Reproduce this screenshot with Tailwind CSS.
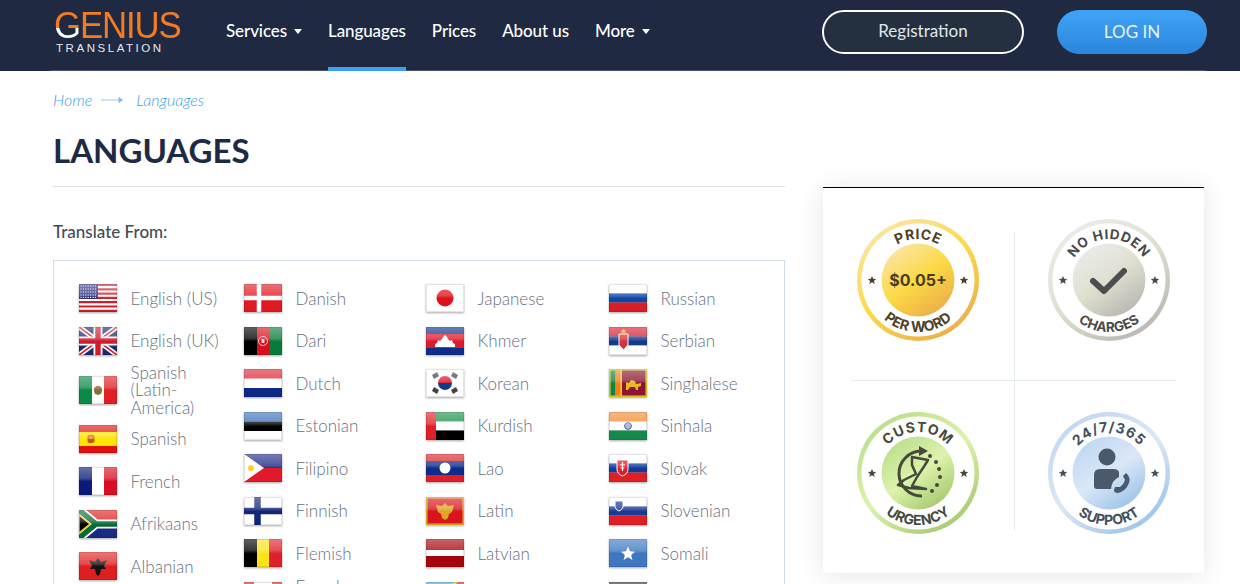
<!doctype html>
<html lang="en">
<head>
<meta charset="utf-8">
<title>Languages</title>
<script src="https://cdn.jsdelivr.net/npm/@tailwindcss/browser@4"></script>
</head>
<body class="bg-white">
<svg class="absolute w-0 h-0" aria-hidden="true"><defs>
<linearGradient id="gl" x1="0" y1="0" x2="0" y2="1"><stop offset="0" stop-color="#fff" stop-opacity=".38"/><stop offset=".4" stop-color="#fff" stop-opacity=".22"/><stop offset=".52" stop-color="#fff" stop-opacity="0"/></linearGradient>
<symbol id="g" viewBox="0 0 38 28"><rect width="38" height="28" fill="url(#gl)"/><rect x=".5" y=".5" width="37" height="27" fill="none" stroke="#000" stroke-opacity=".1"/></symbol>
</defs></svg>
<div class="w-[1240px] h-[584px] overflow-hidden font-['Lato','Liberation_Sans',sans-serif]">
  <header class="relative h-[71px] bg-[#1f2942]">
    <div class="absolute left-[50px] right-[34px] bottom-0 h-[1.5px] bg-[#4c5367]"></div>
    <div class="relative flex items-start h-[71px] pl-[54px]">
      <div class="w-[172px] shrink-0 pt-[9px]">
        <div class="h-[33px] leading-[33px] text-[37px] font-['Liberation_Sans',sans-serif] tracking-[-1.2px] text-[#f47b20] scale-x-[.94] origin-left whitespace-nowrap"><span class="bg-clip-text text-transparent bg-linear-to-b from-[#f47b20] from-55% to-white to-55%">G</span>ENIUS</div>
        <div class="pl-[2px] h-[12px] leading-[12px] text-[11.5px] tracking-[2.55px] text-[#e6e8ec] font-['Liberation_Sans',sans-serif] whitespace-nowrap">TRANSLATION</div>
      </div>
      <nav class="flex gap-[26px] text-[17px] font-medium text-white tracking-[-.1px]">
        <a class="h-[71px] leading-[62px] flex items-start gap-[7px]">Services <span class="mt-[29px] border-x-[4px] border-t-[5px] border-x-transparent border-t-white"></span></a>
        <a class="h-[71px] leading-[62px] border-b-4 border-[#3f9ff0]">Languages</a>
        <a class="h-[71px] leading-[62px]">Prices</a>
        <a class="h-[71px] leading-[62px]">About us</a>
        <a class="h-[71px] leading-[62px] flex items-start gap-[7px]">More <span class="mt-[29px] border-x-[4px] border-t-[5px] border-x-transparent border-t-white"></span></a>
      </nav>
      <a class="absolute left-[822px] top-[10px] w-[202px] h-[44px] rounded-full border-2 border-white bg-[#243040] text-[#e2e5ea] text-[17px] flex items-center justify-center pb-[3px]">Registration</a>
      <a class="absolute left-[1057px] top-[10px] w-[150px] h-[44px] rounded-full bg-linear-to-b from-[#40a4f6] to-[#2c86da] text-[#e8f2fb] text-[17px] flex items-center justify-center">LOG IN</a>
    </div>
  </header>
  <main class="flex pl-[53px] gap-[38px]">
    <section class="w-[732px] shrink-0">
      <div class="h-[58px] pt-[19px] flex items-start italic text-[16px] leading-[20px] text-[#3d9cf0] font-light">
        <span>Home</span>
        <svg class="w-[22px] h-[8px] mx-[9px] mt-[6px]" viewBox="0 0 22 8"><path d="M0 4h21M18 1.5 21.5 4 18 6.5z" fill="#7db9f2" stroke="#7db9f2" stroke-width=".8"/></svg>
        <span class="ml-[4px]">Languages</span>
      </div>
      <h1 class="h-[58px] border-b border-[#dde1e6] text-[33px] leading-[42px] font-bold text-[#1e2a45]">LANGUAGES</h1>
      <div class="h-[73px] pt-[34px] text-[17px] leading-[22px] font-medium text-[#434a59]">Translate From:</div>
      <div class="border border-[#cfdbe6] h-[400px] pl-[25px] pt-[16px] grid grid-cols-[165px_182px_183px_1fr] items-start text-[17px] leading-[17.5px] font-light text-[#66707f]">
        <ul>
          <li class="flex items-center gap-[13.5px] min-h-[42.5px] py-[1.5px] pr-[14px]"><svg class="w-[38px] h-[28px] shrink-0 drop-shadow-[0_1px_1px_rgba(0,0,0,.35)]" viewBox="0 0 38 28"><rect width="38" height="28" fill="#fff"/><path d="M0 1h38M0 5.3h38M0 9.6h38M0 13.9h38M0 18.2h38M0 22.5h38M0 26.8h38" stroke="#c8202f" stroke-width="2.2"/><rect width="19" height="15" fill="#2c2f80"/><path d="M1.5 2h16M1.5 5h16M1.5 8h16M1.5 11h16M1.5 13.5h16" stroke="#fff" stroke-width="1" stroke-dasharray="1 1.4"/><use href="#g"/></svg><span>English (US)</span></li>
          <li class="flex items-center gap-[13.5px] min-h-[42.5px] py-[1.5px] pr-[14px]"><svg class="w-[38px] h-[28px] shrink-0 drop-shadow-[0_1px_1px_rgba(0,0,0,.35)]" viewBox="0 0 38 28"><rect width="38" height="28" fill="#1a2a6e"/><path d="M0 0 38 28M38 0 0 28" stroke="#fff" stroke-width="5"/><path d="M0 0 38 28M38 0 0 28" stroke="#cf1b2b" stroke-width="1.6"/><path d="M19 0v28M0 14h38" stroke="#fff" stroke-width="9"/><path d="M19 0v28M0 14h38" stroke="#cf1b2b" stroke-width="5.4"/><use href="#g"/></svg><span>English (UK)</span></li>
          <li class="flex items-center gap-[13.5px] min-h-[42.5px] py-[1.5px] pr-[14px]"><svg class="w-[38px] h-[28px] shrink-0 drop-shadow-[0_1px_1px_rgba(0,0,0,.35)]" viewBox="0 0 38 28"><rect width="13" height="28" fill="#0a8a45"/><rect x="13" width="12" height="28" fill="#fff"/><rect x="25" width="13" height="28" fill="#df1f26"/><circle cx="19" cy="14" r="4.2" fill="#8f6a35"/><path d="M15.5 17q3.500 3 7 0" stroke="#3f8a3f" fill="none"/><use href="#g"/></svg><span>Spanish (Latin-America)</span></li>
          <li class="flex items-center gap-[13.5px] min-h-[42.5px] py-[1.5px] pr-[14px]"><svg class="w-[38px] h-[28px] shrink-0 drop-shadow-[0_1px_1px_rgba(0,0,0,.35)]" viewBox="0 0 38 28"><rect width="38" height="28" fill="#e01010"/><rect y="7" width="38" height="14" fill="#ffe500"/><rect x="8.500" y="10" width="7" height="8" rx="2" fill="#c8552a"/><path d="M9.500 11h5v3h-5z" fill="#e49a30"/><use href="#g"/></svg><span>Spanish</span></li>
          <li class="flex items-center gap-[13.5px] min-h-[42.5px] py-[1.5px] pr-[14px]"><svg class="w-[38px] h-[28px] shrink-0 drop-shadow-[0_1px_1px_rgba(0,0,0,.35)]" viewBox="0 0 38 28"><rect width="13" height="28" fill="#0a1a78"/><rect x="13" width="12" height="28" fill="#fff"/><rect x="25" width="13" height="28" fill="#d80f24"/><use href="#g"/></svg><span>French</span></li>
          <li class="flex items-center gap-[13.5px] min-h-[42.5px] py-[1.5px] pr-[14px]"><svg class="w-[38px] h-[28px] shrink-0 drop-shadow-[0_1px_1px_rgba(0,0,0,.35)]" viewBox="0 0 38 28"><rect width="38" height="14" fill="#df2020"/><rect y="14" width="38" height="14" fill="#1a2a80"/><path d="M0 0 17 14 0 28M17 14h21" fill="none" stroke="#fff" stroke-width="9"/><path d="M0 0 17 14 0 28M17 14h21" fill="none" stroke="#0a6a35" stroke-width="5.500"/><path d="M0 5 11 14 0 23z" fill="#000" stroke="#f5c518" stroke-width="1.500"/><use href="#g"/></svg><span>Afrikaans</span></li>
          <li class="flex items-center gap-[13.5px] min-h-[42.5px] py-[1.5px] pr-[14px]"><svg class="w-[38px] h-[28px] shrink-0 drop-shadow-[0_1px_1px_rgba(0,0,0,.35)]" viewBox="0 0 38 28"><rect width="38" height="28" fill="#df1f1f"/><path d="M19 6 22 10 28 8 25 14 27 17 22 17 21 22 19 24 17 22 16 17 11 17 13 14 10 8 16 10z" fill="#1a1212"/><use href="#g"/></svg><span>Albanian</span></li>
        </ul>
        <ul>
          <li class="flex items-center gap-[13.5px] min-h-[42.5px] py-[1.5px] pr-[14px]"><svg class="w-[38px] h-[28px] shrink-0 drop-shadow-[0_1px_1px_rgba(0,0,0,.35)]" viewBox="0 0 38 28"><rect width="38" height="28" fill="#df1a22"/><path d="M15 0v28M0 14h38" stroke="#fff" stroke-width="4.500"/><use href="#g"/></svg><span>Danish</span></li>
          <li class="flex items-center gap-[13.5px] min-h-[42.5px] py-[1.5px] pr-[14px]"><svg class="w-[38px] h-[28px] shrink-0 drop-shadow-[0_1px_1px_rgba(0,0,0,.35)]" viewBox="0 0 38 28"><rect width="13" height="28" fill="#000"/><rect x="13" width="12" height="28" fill="#d8101c"/><rect x="25" width="13" height="28" fill="#0a7a3a"/><circle cx="19" cy="14" r="4.500" fill="none" stroke="#f4c8c8" stroke-width="1"/><rect x="17.500" y="12" width="3" height="4" fill="#f4c8c8"/><use href="#g"/></svg><span>Dari</span></li>
          <li class="flex items-center gap-[13.5px] min-h-[42.5px] py-[1.5px] pr-[14px]"><svg class="w-[38px] h-[28px] shrink-0 drop-shadow-[0_1px_1px_rgba(0,0,0,.35)]" viewBox="0 0 38 28"><rect width="38" height="28" fill="#fff"/><rect width="38" height="9.500" fill="#dc2a32"/><rect y="19" width="38" height="9" fill="#0c2a86"/><use href="#g"/></svg><span>Dutch</span></li>
          <li class="flex items-center gap-[13.5px] min-h-[42.5px] py-[1.5px] pr-[14px]"><svg class="w-[38px] h-[28px] shrink-0 drop-shadow-[0_1px_1px_rgba(0,0,0,.35)]" viewBox="0 0 38 28"><rect width="38" height="28" fill="#fff"/><rect width="38" height="9.500" fill="#3a70b8"/><rect y="9.500" width="38" height="9.500" fill="#000"/><use href="#g"/></svg><span>Estonian</span></li>
          <li class="flex items-center gap-[13.5px] min-h-[42.5px] py-[1.5px] pr-[14px]"><svg class="w-[38px] h-[28px] shrink-0 drop-shadow-[0_1px_1px_rgba(0,0,0,.35)]" viewBox="0 0 38 28"><rect width="38" height="14" fill="#1f2a86"/><rect y="14" width="38" height="14" fill="#e01a2a"/><path d="M0 0 20 14 0 28z" fill="#fff"/><circle cx="7" cy="14" r="3" fill="#fcd116"/><use href="#g"/></svg><span>Filipino</span></li>
          <li class="flex items-center gap-[13.5px] min-h-[42.5px] py-[1.5px] pr-[14px]"><svg class="w-[38px] h-[28px] shrink-0 drop-shadow-[0_1px_1px_rgba(0,0,0,.35)]" viewBox="0 0 38 28"><rect width="38" height="28" fill="#fff"/><path d="M13.500 0v28M0 14h38" stroke="#12237a" stroke-width="6.500"/><use href="#g"/></svg><span>Finnish</span></li>
          <li class="flex items-center gap-[13.5px] min-h-[42.5px] py-[1.5px] pr-[14px]"><svg class="w-[38px] h-[28px] shrink-0 drop-shadow-[0_1px_1px_rgba(0,0,0,.35)]" viewBox="0 0 38 28"><rect width="13" height="28" fill="#000"/><rect x="13" width="12" height="28" fill="#fae319"/><rect x="25" width="13" height="28" fill="#df1f2a"/><use href="#g"/></svg><span>Flemish</span></li>
          <li class="flex items-center gap-[13.5px] min-h-[42.5px] py-[1.5px] pr-[14px]"><svg class="w-[38px] h-[28px] shrink-0 drop-shadow-[0_1px_1px_rgba(0,0,0,.35)]" viewBox="0 0 38 28"><rect width="38" height="28" fill="#fff"/><rect width="10" height="28" fill="#df2027"/><rect x="28" width="10" height="28" fill="#df2027"/><use href="#g"/></svg><span>French (Canadian)</span></li>
        </ul>
        <ul>
          <li class="flex items-center gap-[13.5px] min-h-[42.5px] py-[1.5px] pr-[14px]"><svg class="w-[38px] h-[28px] shrink-0 drop-shadow-[0_1px_1px_rgba(0,0,0,.35)]" viewBox="0 0 38 28"><rect width="38" height="28" fill="#fff"/><circle cx="19" cy="14" r="8.500" fill="#e0101c"/><use href="#g"/></svg><span>Japanese</span></li>
          <li class="flex items-center gap-[13.5px] min-h-[42.5px] py-[1.5px] pr-[14px]"><svg class="w-[38px] h-[28px] shrink-0 drop-shadow-[0_1px_1px_rgba(0,0,0,.35)]" viewBox="0 0 38 28"><rect width="38" height="28" fill="#0d2f8a"/><rect y="7" width="38" height="14" fill="#e01a2a"/><path d="M9 20v-3l2-1 1-3 2 1 2-2 1-2 2-2 2 2 1 2 2 2 2-1 1 3 2 1v3z" fill="#fff"/><use href="#g"/></svg><span>Khmer</span></li>
          <li class="flex items-center gap-[13.5px] min-h-[42.5px] py-[1.5px] pr-[14px]"><svg class="w-[38px] h-[28px] shrink-0 drop-shadow-[0_1px_1px_rgba(0,0,0,.35)]" viewBox="0 0 38 28"><rect width="38" height="28" fill="#fff"/><path d="M12 14a7 7 0 0 1 14 0z" fill="#dc1a2c"/><path d="M12 14a7 7 0 0 0 14 0z" fill="#123a8c"/><path d="M6 6 11 3 13 7 8 10zM27 3 32 6 30 10 25 7zM6 22 8 18 13 21 11 25zM30 18 32 22 27 25 25 21z" fill="#444"/><use href="#g"/></svg><span>Korean</span></li>
          <li class="flex items-center gap-[13.5px] min-h-[42.5px] py-[1.5px] pr-[14px]"><svg class="w-[38px] h-[28px] shrink-0 drop-shadow-[0_1px_1px_rgba(0,0,0,.35)]" viewBox="0 0 38 28"><rect width="38" height="9.500" fill="#18904a"/><rect y="9.500" width="38" height="9" fill="#fff"/><rect y="18.500" width="38" height="9.500" fill="#000"/><rect width="10" height="28" fill="#e01f26"/><use href="#g"/></svg><span>Kurdish</span></li>
          <li class="flex items-center gap-[13.5px] min-h-[42.5px] py-[1.5px] pr-[14px]"><svg class="w-[38px] h-[28px] shrink-0 drop-shadow-[0_1px_1px_rgba(0,0,0,.35)]" viewBox="0 0 38 28"><rect width="38" height="28" fill="#df1f26"/><rect y="7" width="38" height="14" fill="#0f2a8c"/><circle cx="19" cy="14" r="5.500" fill="#fff"/><use href="#g"/></svg><span>Lao</span></li>
          <li class="flex items-center gap-[13.5px] min-h-[42.5px] py-[1.5px] pr-[14px]"><svg class="w-[38px] h-[28px] shrink-0 drop-shadow-[0_1px_1px_rgba(0,0,0,.35)]" viewBox="0 0 38 28"><rect x=".75" y=".75" width="36.500" height="26.500" fill="#d9141e" stroke="#e6b820" stroke-width="1.500"/><path d="M19 6 22 9 28 8 26 15 23 17 22 21 19 23 16 21 15 17 12 15 10 8 16 9z" fill="#e0a526"/><use href="#g"/></svg><span>Latin</span></li>
          <li class="flex items-center gap-[13.5px] min-h-[42.5px] py-[1.5px] pr-[14px]"><svg class="w-[38px] h-[28px] shrink-0 drop-shadow-[0_1px_1px_rgba(0,0,0,.35)]" viewBox="0 0 38 28"><rect width="38" height="28" fill="#a4060c"/><rect y="11" width="38" height="6" fill="#fff"/><use href="#g"/></svg><span>Latvian</span></li>
          <li class="flex items-center gap-[13.5px] min-h-[42.5px] py-[1.5px] pr-[14px]"><svg class="w-[38px] h-[28px] shrink-0 drop-shadow-[0_1px_1px_rgba(0,0,0,.35)]" viewBox="0 0 38 28"><rect width="38" height="28" fill="#3fa6d8"/><path d="M0 28 38 0" stroke="#f0d020" stroke-width="11"/><path d="M0 28 38 0" stroke="#d8202a" stroke-width="7"/><use href="#g"/></svg><span>Lingala</span></li>
        </ul>
        <ul>
          <li class="flex items-center gap-[13.5px] min-h-[42.5px] py-[1.5px] pr-[14px]"><svg class="w-[38px] h-[28px] shrink-0 drop-shadow-[0_1px_1px_rgba(0,0,0,.35)]" viewBox="0 0 38 28"><rect width="38" height="9.500" fill="#fff"/><rect y="9.500" width="38" height="9" fill="#0c47a8"/><rect y="18.500" width="38" height="9.500" fill="#d81e26"/><use href="#g"/></svg><span>Russian</span></li>
          <li class="flex items-center gap-[13.5px] min-h-[42.5px] py-[1.5px] pr-[14px]"><svg class="w-[38px] h-[28px] shrink-0 drop-shadow-[0_1px_1px_rgba(0,0,0,.35)]" viewBox="0 0 38 28"><rect width="38" height="9.500" fill="#d81e30"/><rect y="9.500" width="38" height="9" fill="#123a8c"/><rect y="18.500" width="38" height="9.500" fill="#fff"/><path d="M10 7h9v11l-4.500 5L10 18z" fill="#d8303a" stroke="#fff"/><circle cx="14.500" cy="4.500" r="2.200" fill="#e0a526"/><use href="#g"/></svg><span>Serbian</span></li>
          <li class="flex items-center gap-[13.5px] min-h-[42.5px] py-[1.5px] pr-[14px]"><svg class="w-[38px] h-[28px] shrink-0 drop-shadow-[0_1px_1px_rgba(0,0,0,.35)]" viewBox="0 0 38 28"><rect width="38" height="28" fill="#ead21c"/><rect x="1.500" y="1.500" width="5" height="25" fill="#11824a"/><rect x="6.500" y="1.500" width="5" height="25" fill="#f57f20"/><rect x="13" y="1.500" width="23.500" height="25" fill="#8c1530"/><path d="M17 21v-8l3 1 2-3 4 1 1 3 5-1v3l-3 1v3h-2l-1-3h-5l-2 3z" fill="#e8b81f"/><use href="#g"/></svg><span>Singhalese</span></li>
          <li class="flex items-center gap-[13.5px] min-h-[42.5px] py-[1.5px] pr-[14px]"><svg class="w-[38px] h-[28px] shrink-0 drop-shadow-[0_1px_1px_rgba(0,0,0,.35)]" viewBox="0 0 38 28"><rect width="38" height="9.500" fill="#f58a2e"/><rect y="9.500" width="38" height="9" fill="#fff"/><rect y="18.500" width="38" height="9.500" fill="#148a4a"/><circle cx="19" cy="14" r="3.500" fill="#aab4dc" stroke="#41509c" stroke-width=".8"/><use href="#g"/></svg><span>Sinhala</span></li>
          <li class="flex items-center gap-[13.5px] min-h-[42.5px] py-[1.5px] pr-[14px]"><svg class="w-[38px] h-[28px] shrink-0 drop-shadow-[0_1px_1px_rgba(0,0,0,.35)]" viewBox="0 0 38 28"><rect width="38" height="9.500" fill="#fff"/><rect y="9.500" width="38" height="9" fill="#0f3a9c"/><rect y="18.500" width="38" height="9.500" fill="#df1f26"/><path d="M8 6h11v9q0 5-5.500 7Q8 20 8 15z" fill="#df1f26" stroke="#fff"/><path d="M13.500 8v9M11 11h5M11.500 14h4" stroke="#fff" stroke-width="1.200"/><use href="#g"/></svg><span>Slovak</span></li>
          <li class="flex items-center gap-[13.5px] min-h-[42.5px] py-[1.5px] pr-[14px]"><svg class="w-[38px] h-[28px] shrink-0 drop-shadow-[0_1px_1px_rgba(0,0,0,.35)]" viewBox="0 0 38 28"><rect width="38" height="9.500" fill="#fff"/><rect y="9.500" width="38" height="9" fill="#1a3a94"/><rect y="18.500" width="38" height="9.500" fill="#df1f26"/><path d="M6 4h8v6q-1 3-4 4-3-1-4-4z" fill="#1a3a94" stroke="#fff"/><use href="#g"/></svg><span>Slovenian</span></li>
          <li class="flex items-center gap-[13.5px] min-h-[42.5px] py-[1.5px] pr-[14px]"><svg class="w-[38px] h-[28px] shrink-0 drop-shadow-[0_1px_1px_rgba(0,0,0,.35)]" viewBox="0 0 38 28"><rect width="38" height="28" fill="#3d77bf"/><path d="M19 7.500 21 12.300 26 12.700 22.200 16 23.400 21 19 18.300 14.600 21 15.800 16 12 12.700 17 12.300z" fill="#fff"/><use href="#g"/></svg><span>Somali</span></li>
          <li class="flex items-center gap-[13.5px] min-h-[42.5px] py-[1.5px] pr-[14px]"><svg class="w-[38px] h-[28px] shrink-0 drop-shadow-[0_1px_1px_rgba(0,0,0,.35)]" viewBox="0 0 38 28"><rect width="38" height="28" fill="#333"/><use href="#g"/></svg><span>Swahili</span></li>
        </ul>
      </div>
    </section>
    <aside class="relative w-[381px] h-[386px] mt-[116px] shrink-0 border-t border-black bg-white shadow-[0_2px_22px_rgba(40,60,90,.13)] font-['Inter','Liberation_Sans',sans-serif]">
      <div class="absolute left-[191px] top-[44px] w-px h-[299px] bg-[#e6ebf0]"></div>
      <div class="absolute left-[28px] top-[192px] w-[325px] h-px bg-[#e6ebf0]"></div>
      <div class="relative grid grid-cols-[124px_124px] gap-x-[67px] gap-y-[68.5px] pl-[33px] pt-[30px]">
        <svg class="w-[124px] h-[124px]" viewBox="0 0 124 124">
          <defs><linearGradient id="a" x1=".15" y1="0" x2=".85" y2="1"><stop offset="0" stop-color="#fbe6b0"/><stop offset=".5" stop-color="#fcd944"/><stop offset="1" stop-color="#e9a84c"/></linearGradient><path id="a1" d="M21 62A41 41 0 0 1 103 62"/><path id="a2" d="M10 62A52 52 0 0 0 114 62"/></defs>
          <circle cx="62" cy="62" r="61" fill="url(#a)"/><circle cx="62" cy="62" r="56.500" fill="#fff"/><circle cx="62" cy="62" r="36.500" fill="url(#a)"/>
          <text font-size="14" font-weight="700" fill="#4f4126" text-anchor="middle" letter-spacing=".5"><textPath href="#a1" startOffset="50%">PRICE</textPath></text>
          <text font-size="14" font-weight="700" fill="#4f4126" text-anchor="middle"><textPath href="#a2" startOffset="50%">PER WORD</textPath></text>
          <text x="62" y="67.500" font-size="16" font-weight="700" fill="#4a3d22" text-anchor="middle">$0.05+</text>
          <path id="s" d="M16 58 17.200 60.800 20.200 61 17.900 63 18.700 66 16 64.300 13.300 66 14.100 63 11.800 61 14.800 60.800z" fill="#4f4126"/><path d="M108 58 109.200 60.800 112.200 61 109.900 63 110.700 66 108 64.300 105.300 66 106.100 63 103.800 61 106.800 60.800z" fill="#4f4126"/>
        </svg>
        <svg class="w-[124px] h-[124px]" viewBox="0 0 124 124">
          <defs><linearGradient id="b" x1=".15" y1="0" x2=".85" y2="1"><stop offset="0" stop-color="#eceded"/><stop offset=".5" stop-color="#dfdfcf"/><stop offset="1" stop-color="#b3b2ae"/></linearGradient><path id="b1" d="M21 62A41 41 0 0 1 103 62"/><path id="b2" d="M10 62A52 52 0 0 0 114 62"/></defs>
          <circle cx="62" cy="62" r="61" fill="url(#b)"/><circle cx="62" cy="62" r="56.500" fill="#fff"/><circle cx="62" cy="62" r="36.500" fill="url(#b)"/>
          <text font-size="13.500" font-weight="700" fill="#4a4a4a" text-anchor="middle" letter-spacing=".8"><textPath href="#b1" startOffset="50%">NO HIDDEN</textPath></text>
          <text font-size="13.500" font-weight="700" fill="#4a4a4a" text-anchor="middle"><textPath href="#b2" startOffset="50%">CHARGES</textPath></text>
          <path d="M46 63 57 73 77 53" fill="none" stroke="#4d4d4d" stroke-width="6" stroke-linecap="round" stroke-linejoin="round"/>
          <path d="M16 58 17.200 60.800 20.200 61 17.900 63 18.700 66 16 64.300 13.300 66 14.100 63 11.800 61 14.800 60.800z" fill="#4a4a4a"/><path d="M108 58 109.200 60.800 112.200 61 109.900 63 110.700 66 108 64.300 105.300 66 106.100 63 103.800 61 106.800 60.800z" fill="#4a4a4a"/>
        </svg>
        <svg class="w-[124px] h-[124px]" viewBox="0 0 124 124">
          <defs><linearGradient id="c" x1=".15" y1="0" x2=".85" y2="1"><stop offset="0" stop-color="#b8dc8a"/><stop offset=".5" stop-color="#dcf3ab"/><stop offset="1" stop-color="#a0c468"/></linearGradient><path id="c1" d="M21 62A41 41 0 0 1 103 62"/><path id="c2" d="M10 62A52 52 0 0 0 114 62"/></defs>
          <circle cx="62" cy="62" r="61" fill="url(#c)"/><circle cx="62" cy="62" r="56.500" fill="#fff"/><circle cx="62" cy="62" r="36.500" fill="url(#c)"/>
          <text font-size="14" font-weight="700" fill="#454a3a" text-anchor="middle" letter-spacing="1"><textPath href="#c1" startOffset="50%">CUSTOM</textPath></text>
          <text font-size="14" font-weight="700" fill="#454a3a" text-anchor="middle"><textPath href="#c2" startOffset="50%">URGENCY</textPath></text>
          <path d="M66 85A22 22 0 1 1 65 40" fill="none" stroke="#454a3a" stroke-width="3"/><path d="M63 35 72 40 63 45z" fill="#454a3a"/>
          <path d="M74 45h.01M80 51h.01M83 58h.01M84 66h.01M81 74h.01M76 80h.01" stroke="#454a3a" stroke-width="4" stroke-linecap="round"/>
          <path d="M56 46 72 49 69 54 61 66 56 75 70 78 53 77 42 74 48 69 60 63 56 54z" fill="none" stroke="#454a3a" stroke-width="2.500" stroke-linejoin="round"/>
          <path d="M16 58 17.200 60.800 20.200 61 17.900 63 18.700 66 16 64.300 13.300 66 14.100 63 11.800 61 14.800 60.800z" fill="#454a3a"/><path d="M108 58 109.200 60.800 112.200 61 109.900 63 110.700 66 108 64.300 105.300 66 106.100 63 103.800 61 106.800 60.800z" fill="#454a3a"/>
        </svg>
        <svg class="w-[124px] h-[124px]" viewBox="0 0 124 124">
          <defs><linearGradient id="d" x1=".15" y1="0" x2=".85" y2="1"><stop offset="0" stop-color="#bcd6f2"/><stop offset=".5" stop-color="#dbe8f7"/><stop offset="1" stop-color="#94bfe8"/></linearGradient><path id="d1" d="M21 62A41 41 0 0 1 103 62"/><path id="d2" d="M10 62A52 52 0 0 0 114 62"/></defs>
          <circle cx="62" cy="62" r="61" fill="url(#d)"/><circle cx="62" cy="62" r="56.500" fill="#fff"/><circle cx="62" cy="62" r="36.500" fill="url(#d)"/>
          <text font-size="14" font-weight="700" fill="#44505c" text-anchor="middle" letter-spacing=".8"><textPath href="#d1" startOffset="50%">24/7/365</textPath></text>
          <text font-size="14" font-weight="700" fill="#44505c" text-anchor="middle"><textPath href="#d2" startOffset="50%">SUPPORT</textPath></text>
          <circle cx="60" cy="46" r="8.500" fill="#4a5a6c"/><path d="M47 64q0-6 6-6h13q6 0 6 4v4q-7 3-8 12H50q-3 0-3-3z" fill="#4a5a6c"/><path d="M79 62q5 4 3 10-3 8-11 10-4 0-4-3l1-3 5 0q4-3 5-7l-2-4z" fill="#4a5a6c"/>
          <path d="M16 58 17.200 60.800 20.200 61 17.900 63 18.700 66 16 64.300 13.300 66 14.100 63 11.800 61 14.800 60.800z" fill="#44505c"/><path d="M108 58 109.200 60.800 112.200 61 109.900 63 110.700 66 108 64.300 105.300 66 106.100 63 103.800 61 106.800 60.800z" fill="#44505c"/>
        </svg>
      </div>
    </aside>
  </main>
</div>
</body>
</html>
